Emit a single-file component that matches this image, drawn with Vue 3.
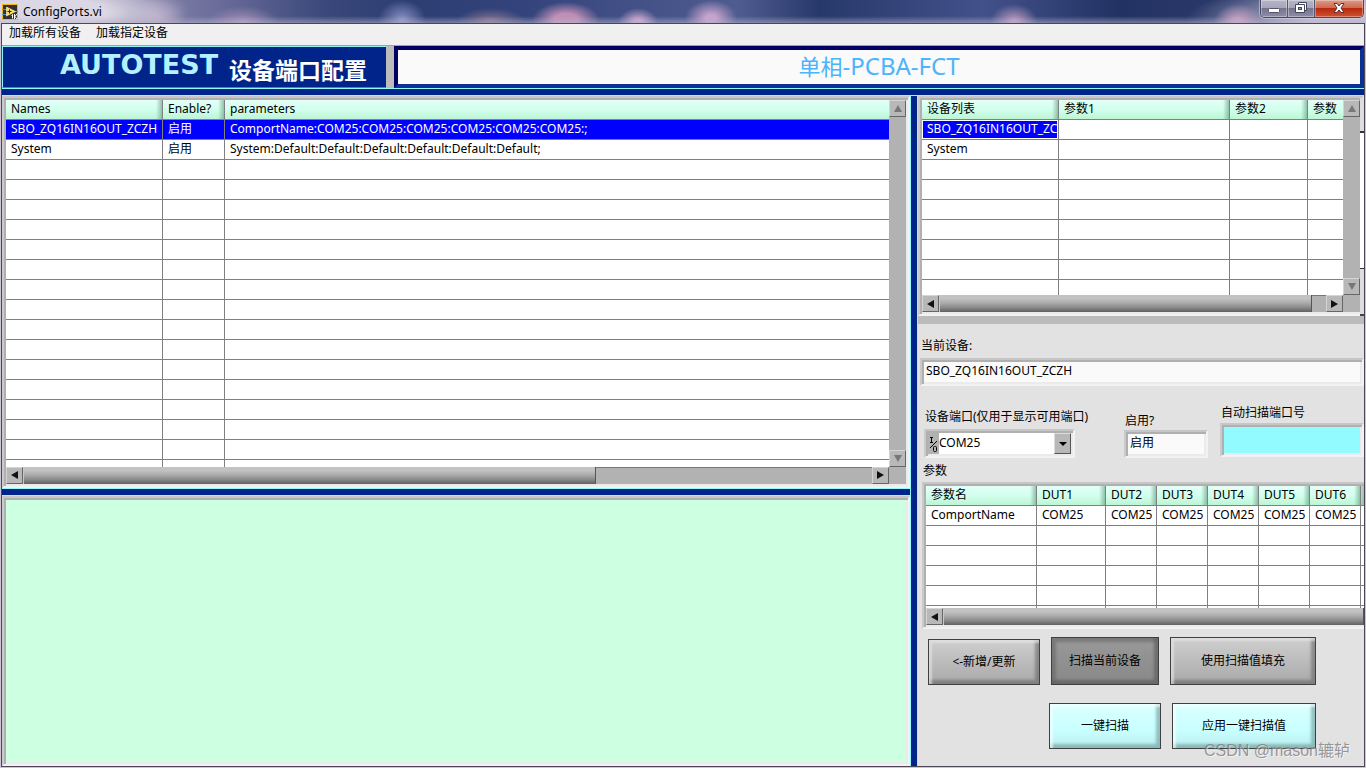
<script setup>
import { ref } from 'vue'

const rows = [
  ['SBO_ZQ16IN16OUT_ZCZH', '启用', 'ComportName:COM25:COM25:COM25:COM25:COM25:COM25:;'],
  ['System', '启用', 'System:Default:Default:Default:Default:Default:Default;'],
]
const blank = (n) => Array.from({ length: n }, () => [])
const mainRows = [...rows, ...blank(26)]
const deviceRows = [['SBO_ZQ16IN16OUT_ZCZH'], ['System'], ...blank(7)]
const dutCols = ['DUT1', 'DUT2', 'DUT3', 'DUT4', 'DUT5', 'DUT6', '']
const paramRows = [['ComportName', 'COM25', 'COM25', 'COM25', 'COM25', 'COM25', 'COM25', ''], ...blank(5)]
const port = ref('COM25')
const device = ref('SBO_ZQ16IN16OUT_ZCZH')
const enabled = ref('启用')
const scanned = ref('')
</script>

<template>
  <div class="window">
    <header class="titlebar">
      <svg class="appicon" viewBox="0 0 16 16" width="16" height="16" aria-hidden="true">
        <rect x="0.5" y="0.5" width="15" height="15" fill="#33332c" stroke="#f2b51d" />
        <path d="M0 5.500h5M0 10.500h5M12 7.500h4" stroke="#4f94c8" />
        <path d="M4.500 3l9 4.500l-9 4.500z" fill="#fbdc62" stroke="#fff3b0" stroke-width=".6" />
        <path d="M5.500 7.500h4M7.500 5.500v4" stroke="#222" />
        <path d="M9.500 11.500l1-1v4M12.500 10v5M15 10l-2 2.500l2 2.500" fill="none" stroke="#fff" />
      </svg>
      <h1>ConfigPorts.vi</h1>
      <div class="winbtns">
        <button aria-label="最小化">
          <svg width="14" height="16" viewBox="0 0 14 16"><rect x="1.500" y="8.500" width="11" height="4" rx="1" fill="#fff" stroke="#55566a" /></svg>
        </button>
        <button aria-label="还原">
          <svg width="14" height="16" viewBox="0 0 14 16">
            <path d="M4.500 2.500h8v8h-8z" fill="#fff" stroke="#45465a" />
            <path d="M1.500 4.500h9v8h-9z" fill="#fff" stroke="#45465a" />
            <rect x="4.500" y="7.500" width="3" height="2" fill="#9a9bb0" stroke="#45465a" />
          </svg>
        </button>
        <button class="close" aria-label="关闭">
          <svg width="14" height="16" viewBox="0 0 14 16"><path d="M2 3.500h3l2 2.500l2-2.500h3L9 8l3 4.500H9L7 10l-2 2.500H2L5 8z" fill="#fff" stroke="#5a3038" /></svg>
        </button>
      </div>
    </header>

    <div class="client">
      <nav class="menu"><button>加载所有设备</button><button>加载指定设备</button></nav>

      <div class="banner">
        <div class="brand"><b class="en">AUTOTEST</b><b class="cn">设备端口配置</b></div>
        <div class="project">单相<span>-PCBA-FCT</span></div>
      </div>
      <div class="splitter"></div>

      <main class="body">
        <section class="left">
          <div class="frame main-frame">
            <div class="grid-area">
              <table class="grid">
                <colgroup><col class="w157"><col class="w62"><col></colgroup>
                <thead><tr><th>Names</th><th>Enable?</th><th class="cut">parameters</th></tr></thead>
                <tbody>
                  <tr v-for="(r, i) in mainRows" :key="i" :class="{ sel: i === 0 }">
                    <td v-for="c in 3" :key="c">{{ r[c - 1] }}</td>
                  </tr>
                </tbody>
              </table>
            </div>
            <div class="vbar"><button class="up" aria-label="上"><i></i></button><button class="down" aria-label="下"><i></i></button></div>
            <div class="hbar"><button class="lt" aria-label="左"><i></i></button><div class="track"><span class="thumb part"></span></div><button class="rt" aria-label="右"><i></i></button></div>
          </div>
          <div class="splitter"></div>
          <div class="frame log"></div>
        </section>

        <div class="vsplitter"></div>

        <aside class="right">
          <div class="frame dev-frame">
            <div class="grid-area">
              <table class="grid">
                <colgroup><col class="w137"><col class="w171"><col class="w78"><col></colgroup>
                <thead><tr><th>设备列表</th><th>参数1</th><th>参数2</th><th class="cut">参数</th></tr></thead>
                <tbody>
                  <tr v-for="(r, i) in deviceRows" :key="i">
                    <td v-for="c in 4" :key="c" :class="{ cell: i === 0 && c === 1 }">{{ r[c - 1] }}</td>
                  </tr>
                </tbody>
              </table>
            </div>
            <div class="vbar"><button class="up" aria-label="上"><i></i></button><button class="down" aria-label="下"><i></i></button></div>
            <div class="hbar"><button class="lt" aria-label="左"><i></i></button><div class="track"><span class="thumb most"></span></div><button class="rt" aria-label="右"><i></i></button></div>
          </div>
          <div class="divider"></div>

          <div class="form">
            <label for="device">当前设备:</label>
            <div class="frame field"><input id="device" v-model="device"></div>

            <div class="trio">
              <div class="c-port">
                <label for="port">设备端口(仅用于显示可用端口)</label>
                <div class="frame combo">
                  <svg width="11" height="22" viewBox="0 0 11 22" aria-hidden="true">
                    <path d="M2 4.500h3M3.500 4v5M2 9.500h3M9 8l-7 7" fill="none" stroke="#000" />
                    <rect x="5.500" y="13.500" width="3" height="5" rx="1" fill="none" stroke="#000" />
                  </svg>
                  <select id="port" v-model="port"><option>COM25</option></select>
                  <span class="drop"></span>
                </div>
              </div>
              <div class="c-enable">
                <label for="enable">启用?</label>
                <div class="frame field"><input id="enable" v-model="enabled"></div>
              </div>
              <div class="c-scan">
                <label for="scan">自动扫描端口号</label>
                <div class="frame field cyan"><input id="scan" v-model="scanned"></div>
              </div>
            </div>

            <div class="caption">参数</div>
            <div class="frame par-frame">
              <div class="grid-area">
                <table class="grid">
                  <colgroup><col class="w111"><col class="w69"><col v-for="n in 5" :key="n" class="w51"><col></colgroup>
                  <thead><tr><th>参数名</th><th v-for="(d, i) in dutCols" :key="i">{{ d }}</th></tr></thead>
                  <tbody>
                    <tr v-for="(r, i) in paramRows" :key="i"><td v-for="c in 8" :key="c">{{ r[c - 1] }}</td></tr>
                  </tbody>
                </table>
              </div>
              <div class="hbar"><button class="lt" aria-label="左"><i></i></button><div class="track"><span class="thumb all"></span></div></div>
            </div>

            <div class="actions one">
              <button class="act add">&lt;-新增/更新</button>
              <button class="act dark">扫描当前设备</button>
              <button class="act fill">使用扫描值填充</button>
            </div>
            <div class="actions two">
              <button class="act aqua">一键扫描</button>
              <button class="act aqua wide">应用一键扫描值</button>
            </div>
          </div>
          <div class="watermark">CSDN @mason辘轳</div>
        </aside>
      </main>
    </div>
  </div>
</template>

<style>
html, body { margin: 0; overflow: hidden; }
</style>

<style scoped>
* { box-sizing: border-box; }
.window {
  height: 100vh; display: flex; flex-direction: column;
  padding: 0 1px 1px; background: #cdc5d6;
  font: 12px/16px "Noto Sans", "Noto Sans CJK SC", sans-serif; color: #000;
}
button, input, select { font: inherit; color: inherit; margin: 0; padding: 0; border: 0; border-radius: 0; }
.titlebar {
  flex: none; height: 23px; margin: 0 -1px; padding-left: 2px; display: flex; gap: 5px;
  background:
    linear-gradient(transparent 70%, #b9b4cc88),
    radial-gradient(ellipse 140px 34px at 50px 12px, #dcd7e4 40%, #dcd7e400),
    radial-gradient(ellipse 28px 18px at 157px 17px, #c5aecbaa, #c5aecb00),
    radial-gradient(ellipse 36px 16px at 243px 22px, #c8a6c6aa, #c8a6c600),
    radial-gradient(ellipse 24px 20px at 402px 20px, #8e93c8, #8e93c800),
    radial-gradient(ellipse 34px 12px at 491px 20px, #81708d, #81708d00),
    radial-gradient(ellipse 34px 18px at 566px 20px, #c08fb6 35%, #c08fb600),
    radial-gradient(ellipse 20px 14px at 638px 22px, #c5a2cb 20%, #c5a2cb00),
    radial-gradient(ellipse 26px 18px at 711px 18px, #c5a2cb 20%, #c5a2cb00),
    radial-gradient(ellipse 24px 18px at 1014px 22px, #b898bd 10%, #b898bd00),
    radial-gradient(ellipse 24px 18px at 1238px 22px, #c39ec0 20%, #c39ec000),
    radial-gradient(ellipse 180px 40px at 1366px 20px, #c4bfd4 30%, #c4bfd400),
    linear-gradient(90deg, #b5b0c8 0, #6a6c9a 16%, #39477a 24%, #2c3e72 30%, #33437b 38%, #4f5c90 54%, #27386a 60%, #43518a 72%, #223263 82%, #2c3b6c 92%, #8d8bab);
}
.appicon { flex: none; margin-top: 4px; }
.titlebar h1 { margin: 4px 0 0; flex: 1; font-size: 12px; line-height: 16px; font-weight: 400; }
.winbtns { flex: none; display: flex; width: 104px; height: 18px; margin-right: 2px; border: 1px solid #46485f; border-top: 0; border-radius: 0 0 5px 5px; box-shadow: 0 0 0 1px #d8d5e488; overflow: hidden; }
.winbtns button { flex: 0 0 27px; height: 17px; border-right: 1px solid #55576d; background: linear-gradient(#b7b5c7, #a6a5ba 45%, #74748d 50%, #8e8da7); display: flex; justify-content: center; box-shadow: inset 0 0 0 1px #ffffff55; }
.winbtns .close { flex: 1; border: 0; background: linear-gradient(#dd9b89, #cf6a50 45%, #b8290d 50%, #cf5232); }
.client { flex: 1; min-height: 0; display: flex; flex-direction: column; border: 1px solid #4d4654; background: #e2e2e2; }
.menu { flex: none; height: 22px; display: flex; gap: 15px; padding: 0 7px 3px; background: #f0f0f0; border-bottom: 1px solid #a0a0a0; box-shadow: 0 1px #fff; }
.menu button { background: none; }
.banner { flex: none; height: 42px; display: flex; gap: 8px; background: #bcbcbc; }
.brand { flex: 0 0 384px; display: flex; gap: 11px; padding-left: 57px; background: #002489; border: solid #8ff5fb; border-width: 1px 0 0 1px; border-bottom: 1px solid #5f7f8f; white-space: nowrap; }
.en { font: 700 27px/36px "DejaVu Sans", sans-serif; color: #b5f0ff; }
.cn { font: 700 23px/44px "Noto Sans CJK SC", sans-serif; color: #fff; }
.project { flex: 1; border: 4px solid; border-color: #000064 #0a3296 #0a3296 #000064; background: #fafafa; color: #4bb4fa; font-size: 22px; line-height: 32px; text-align: center; white-space: nowrap; }
.project span { font-size: 24px; }
.splitter { flex: none; height: 8px; background: #002489; border: solid #8ffafc; border-width: 1px 0; }
.body { flex: 1; min-height: 0; display: flex; }
.left { flex: 908 1 0; min-width: 0; display: flex; flex-direction: column; }
.vsplitter { flex: 0 0 8px; background: #002489; border: solid #8ffafc; border-width: 0 1px; }
.right { flex: 446 1 0; min-width: 0; display: flex; flex-direction: column; position: relative; background: #e2e2e2; }
.frame { border: 2px solid; border-color: #c6c6c6 #f2f2f2 #f2f2f2 #cacaca; padding: 2px; box-shadow: inset 2px 2px #b0b0b0, inset -2px -2px #ebebeb; }
.main-frame, .dev-frame { display: grid; grid-template: minmax(0, 1fr) 17px / minmax(0, 1fr) 17px; background: #b2b2b2; }
.main-frame { flex: 392 1 0; min-height: 0; }
.log { flex: 268 1 0; min-height: 0; background: #cdffe1; }
.dev-frame { flex: none; height: 220px; position: relative; }
.dev-frame::after { content: ""; position: absolute; top: 0; bottom: -2px; right: -2px; width: 4px; background: linear-gradient(#ddd 33px, #333 33px 35px, #fff 35px 170px, #333 170px 171px, #ddd 171px calc(100% - 2px), #444 calc(100% - 2px)); }
.grid-area { overflow: hidden; background: #fff; min-width: 0; min-height: 0; }
.grid { width: 100%; table-layout: fixed; border-collapse: separate; border-spacing: 0; }
.grid th, .grid td { height: 20px; padding: 0 0 2px 5px; overflow: hidden; white-space: nowrap; text-align: left; font-weight: 400; line-height: 17px; border: solid #808080; border-width: 0 1px 1px 0; }
.grid th:last-child, .grid td:last-child { border-right: 0; }
.grid th { background: linear-gradient(90deg, transparent calc(100% - 6px), #5f9a7c99), linear-gradient(#e4fff8, #d2ffee 50%, #bdf5d4); }
.grid th.cut { background: linear-gradient(#e4fff8, #d2ffee 50%, #bdf5d4); }
.grid .sel td { background: #00f; color: #fff; }
.grid .cell { background: #00f; color: #fff; box-shadow: inset 1px 1px #fff, inset -1px -1px #fff; }
.w157 { width: 157px; } .w62 { width: 62px; } .w137 { width: 137px; } .w171 { width: 171px; }
.w78 { width: 78px; } .w111 { width: 111px; } .w69 { width: 69px; } .w51 { width: 51px; }
.vbar { display: flex; flex-direction: column; justify-content: space-between; background: #b2b2b2; }
.hbar { height: 17px; display: flex; background: #b2b2b2; }
.vbar button, .hbar button { flex: 0 0 17px; width: 17px; height: 17px; display: grid; place-items: center; background: #b8b8b8; border: 1px solid; border-color: #d4d4d4 #666 #666 #d4d4d4; }
.hbar i, .vbar i { border: 4px solid transparent; }
.lt i { border-right: 7px solid #111; border-left: 0; }
.rt i { border-left: 7px solid #111; border-right: 0; }
.up i { border-bottom: 7px solid #777; border-top: 0; }
.down i { border-top: 7px solid #777; border-bottom: 0; }
.track { flex: 1; display: flex; border-top: 1px solid #777; }
.thumb { margin-top: -1px; background: linear-gradient(#c2c2c2 20%, #adadad 45%, #888 75%, #606060); border-right: 1px solid #555; box-shadow: inset 1px 0 #c8c8c8; }
.part { width: 67.5%; } .most { width: 96.5%; } .all { width: 100%; }
.divider { flex: none; height: 8px; background: #bcbcbc; }
.form { padding-top: 14px; }
.form label, .caption { display: block; height: 16px; margin-left: 3px; white-space: nowrap; }
.field { display: flex; background: #fafafa; }
.field input { width: 100%; min-width: 0; background: transparent; padding: 0 0 3px 2px; outline: 0; }
.form > .field { height: 28px; margin: 4px 0 0 2px; }
.trio { display: flex; margin: 17px 0 0 6px; height: 56px; }
.c-port { width: 200px; padding-top: 6px; }
.trio label { margin-left: 1px; }
.c-enable { width: 96px; padding-top: 10px; }
.c-scan { flex: 1; padding-top: 2px; }
.combo { display: flex; width: 151px; height: 29px; margin-top: 4px; position: relative; background: #b2b2b2; }
.combo select { flex: 1; appearance: none; background: #fff; padding: 0 0 2px; outline: 0; }
.drop { position: absolute; right: 2px; top: 2px; width: 17px; height: 21px; pointer-events: none; background: #b8b8b8; border: 1px solid; border-color: #ddd #555 #555 #ddd; display: grid; place-items: center; }
.drop::after { content: ""; border: 4px solid transparent; border-top-color: #000; border-bottom: 0; }
.c-enable .field { width: 84px; height: 28px; margin-top: 1px; }
.c-scan .field { height: 34px; margin-top: 2px; }
.c-scan .cyan { background: #91fbff; }
.caption { margin: 4px 0 0 5px; }
.par-frame { margin: 3px 0 0 4px; height: 147px; display: flex; flex-direction: column; border-right: 0; padding-right: 0; box-shadow: inset 2px 2px #b0b0b0, inset 0 -2px #ebebeb; }
.par-frame .grid-area { flex: 1; }
.actions { display: flex; }
.one { gap: 11px; margin: 8px 0 0 10px; align-items: flex-end; }
.two { gap: 11px; margin: 18px 0 0 131px; }
.act { width: 112px; height: 46px; border: 1px solid #404040; background: linear-gradient(#cfcfcf, #b8b8b8 60%, #a8a8a8); box-shadow: inset 3px 3px 2px #e4e4e4aa, inset -4px -4px 3px #66666699; }
.act.dark { width: 108px; height: 48px; background: linear-gradient(#999, #888); box-shadow: inset 4px 4px 3px #66666699, inset -4px -4px 3px #55555599; }
.act.fill { width: 146px; height: 48px; }
.act.aqua { background: linear-gradient(#dcffff, #c8ffff 60%, #bdeeee); box-shadow: inset 3px 3px 2px #f4ffffaa, inset -4px -4px 3px #5d8a8a88; }
.act.wide { width: 144px; }
.watermark { position: absolute; right: 14px; bottom: 3px; font: 16px/24px "Liberation Sans", "Noto Sans CJK SC", sans-serif; color: #777b; text-shadow: 1px 1px #fff8; pointer-events: none; white-space: nowrap; }
</style>
